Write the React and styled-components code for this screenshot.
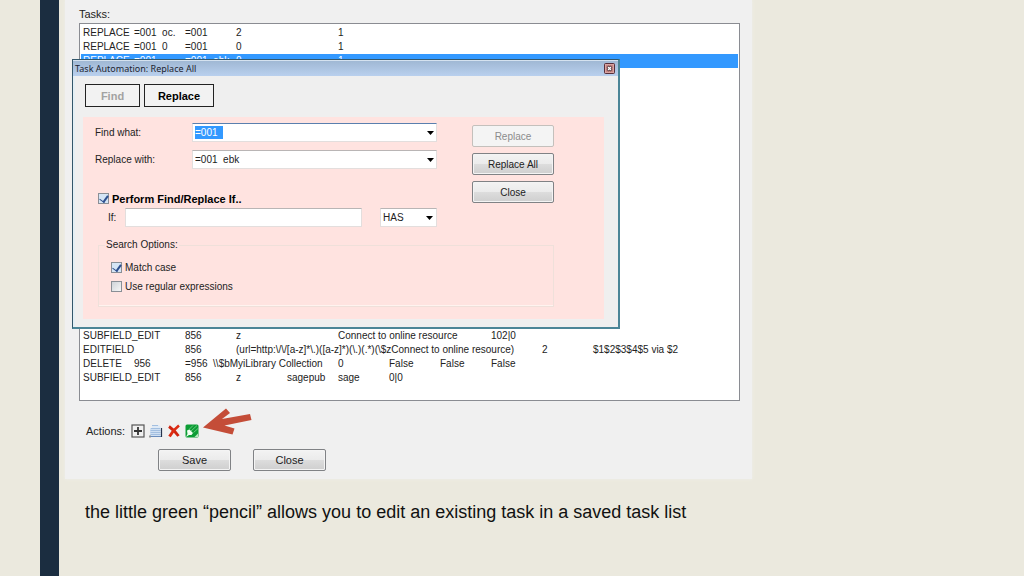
import React, { useEffect, useRef } from "react";
import styled, { createGlobalStyle } from "styled-components";

const GlobalStyle = createGlobalStyle`
  * {
    box-sizing: border-box;
  }
  body {
    margin: 0;
    background: #ebe9de;
    font-family: "Liberation Sans", Arial, sans-serif;
    font-size: 11px;
    color: #222;
  }
  button, input, select {
    font-family: inherit;
    font-size: inherit;
    color: inherit;
  }
`;

const Slide = styled.div`
  display: flex;
  min-height: 100vh;
  padding-left: 40px;
`;

const Stripe = styled.div`
  flex: 0 0 19px;
  background: #1b2d40;
`;

const Content = styled.main`
  flex: 1;
  min-width: 0;
  padding-left: 6px;
`;

const Panel = styled.section`
  position: relative;
  max-width: 687px;
  padding: 7px 12px 8px 14px;
  background: #f0f0f0;
  box-shadow: 0 0 3px #f0f0ec;
`;

const PanelTitle = styled.h2`
  margin: 0 0 2px;
  font-size: 11px;
  font-weight: 400;
  line-height: 14px;
`;

const TaskList = styled.div`
  display: flex;
  flex-direction: column;
  justify-content: space-between;
  min-height: 378px;
  padding: 2px 1px 15px;
  background: #fff;
  border: 1px solid #8a8c92;
  font-size: 10px;
  overflow: hidden;
`;

const Rows = styled.ul`
  margin: 0;
  padding: 0;
  list-style: none;
`;

const Row = styled.li`
  display: grid;
  grid-template-columns: repeat(12, 51px);
  padding-left: 2px;
  line-height: 14px;
  height: 14px;
  color: ${(props) => (props.$selected ? "#fff" : "inherit")};
  background: ${(props) => (props.$selected ? "#3399ff" : "none")};
`;

const Cell = styled.span`
  grid-row: 1;
  grid-column: ${(props) => props.$col};
  white-space: pre;
`;

const Actions = styled.div`
  display: flex;
  align-items: center;
  gap: 4px;
  margin-top: 23px;
  padding-left: 7px;
  line-height: 14px;
`;

const ActionsLabel = styled.span`
  margin-right: 2px;
`;

const IconButton = styled.button`
  display: flex;
  padding: 0;
  border: 0;
  background: none;
`;

const Pointer = styled.svg`
  position: absolute;
  left: 136px;
  top: 405px;
`;

const Footer = styled.div`
  display: flex;
  gap: 22px;
  margin-top: 11px;
  padding-left: 79px;
`;

const PushButton = styled.button`
  width: ${(props) => props.$width};
  height: 22px;
  padding: 0;
  border: 1px solid #808285;
  border-radius: 2px;
  background: linear-gradient(#f3f3f3, #ebebeb 50%, #dddddd 50%, #cfcfcf);
  box-shadow: inset 0 0 0 1px #f4f4f4;
  &:disabled {
    color: #8c8c8c;
    border-color: #c4c0bc;
    background: #f4f4f4;
  }
`;

const Caption = styled.p`
  margin: 20px 0 0 20px;
  font-size: 18px;
  line-height: 26px;
  color: #111;
`;

const Dialog = styled.div`
  position: absolute;
  left: 7px;
  right: 132px;
  top: 59px;
  background: #efefef;
  border: 1px solid #33576b;
  border-right: 2px solid #4b8597;
  border-bottom: 2px solid #4b8597;
`;

const TitleBar = styled.header`
  display: flex;
  align-items: center;
  justify-content: space-between;
  height: 16px;
  padding: 0 3px 0 2px;
  background: linear-gradient(#a0b8d4, #b9d0ee);
  border-top: 1px solid #d5e2ef;
`;

const DialogTitle = styled.h1`
  margin: 0;
  font-family: "Noto Sans", "Open Sans", sans-serif;
  font-size: 9px;
  font-weight: 400;
  line-height: 14px;
  color: #1c2430;
`;

const CloseBox = styled.button`
  display: flex;
  padding: 0;
  border: 0;
  background: none;
`;

const DialogBody = styled.div`
  padding: 8px 14px 8px 10px;
  border-left: 2px solid #e4eff4;
`;

const Tabs = styled.div`
  display: flex;
  gap: 4px;
  margin-bottom: 10px;
`;

const Tab = styled.button`
  width: ${(props) => props.$width};
  height: 23px;
  padding: 0;
  border: 1px solid #222;
  background: #f2f2f2;
  font-weight: 700;
  color: #000;
  &:disabled {
    color: #a2a2a2;
  }
`;

const Form = styled.form`
  margin-left: -2px;
  padding: 6px 50px 12px 12px;
  background: #ffe3e0;
  font-size: 10px;
`;

const FormTop = styled.div`
  display: flex;
  justify-content: space-between;
`;

const Fields = styled.div`
  flex: 0 1 342px;
`;

const Field = styled.div`
  display: flex;
  align-items: center;
  height: 19px;
  margin-bottom: 8px;
`;

const FieldLabel = styled.label`
  flex: 0 0 97px;
`;

const Combo = styled.div`
  position: relative;
  display: flex;
  flex: ${(props) => (props.$width ? `0 0 ${props.$width}` : 1)};
  height: 19px;
  background: #fff;
  border: 1px solid #e3dedd;
  border-top-color: ${(props) => (props.$active ? "#5a7fae" : "#b9b5b5")};
`;

const TextBox = styled.input`
  flex: 1;
  min-width: 0;
  padding: 0 2px;
  border: 0;
  outline: 0;
  background: none;
  line-height: 13px;
  caret-color: transparent;
  &::selection {
    color: #fff;
    background: #3399ff;
  }
`;

const DropButton = styled.button`
  display: flex;
  align-items: center;
  justify-content: center;
  width: 12px;
  padding: 0;
  border: 0;
  background: none;
`;

const DropDown = styled.select`
  width: 100%;
  padding: 0 2px;
  border: 0;
  outline: 0;
  background: none;
  appearance: none;
`;

const SelectArrow = styled.span`
  position: absolute;
  right: 3px;
  top: 0;
  height: 100%;
  display: flex;
  align-items: center;
  pointer-events: none;
`;

const CheckLabel = styled.label`
  display: flex;
  align-items: center;
  gap: 3px;
  height: 19px;
  font-size: ${(props) => (props.$bold ? "11px" : "10px")};
  font-weight: ${(props) => (props.$bold ? 700 : 400)};
  color: ${(props) => (props.$bold ? "#000" : "inherit")};
`;

const CheckBox = styled.input`
  appearance: none;
  display: grid;
  place-content: center;
  width: 11px;
  height: 11px;
  margin: 0;
  border: 1px solid #8a8f96;
  background: linear-gradient(135deg, #cfd3d8, #f6f6f6);
  &:checked {
    background: #d5e5f5;
  }
  &:checked::before {
    content: "";
    width: 4px;
    height: 7px;
    margin-top: -2px;
    border: solid #2d4f8e;
    border-width: 0 2px 1px 0;
    transform: rotate(36deg);
  }
`;

const Condition = styled.div`
  padding: 12px 0 0 3px;
`;

const ConditionRow = styled.div`
  display: flex;
  align-items: center;
  padding-left: 10px;
`;

const IfLabel = styled.label`
  flex: 0 0 17px;
`;

const ConditionBox = styled(TextBox)`
  height: 19px;
  margin-right: 18px;
  background: #fff;
  border: 1px solid #e3dedd;
  border-top-color: #b9b5b5;
`;

const Options = styled.fieldset`
  margin: 11px 0 0 3px;
  padding: 6px 12px 10px;
  border: 1px solid #efe0da;
  box-shadow: inset 0 -1px #fff3ef;
  legend {
    margin-left: -6px;
    padding: 0 1px;
    line-height: 14px;
  }
`;

const Buttons = styled.div`
  display: flex;
  flex-direction: column;
  gap: 6px;
  padding-top: 2px;
`;

const topTasks = [
  ["REPLACE", "=001  oc.", "=001", "2", "", "1"],
  ["REPLACE", "=001  0", "=001", "0", "", "1"],
  ["REPLACE", "=001", "=001  ebk", "0", "", "1"],
];

const bottomTasks = [
  ["SUBFIELD_EDIT", "", "856", "z", "", "Connect to online resource", "", "", "102|0"],
  ["EDITFIELD", "", "856", "(url=http:\\/\\/[a-z]*\\.)([a-z]*)(\\.)(.*)(\\$zConnect to online resource)", "", "", "", "", "", "2", "$1$2$3$4$5 via $2"],
  ["DELETE", "956", "=956  \\\\$bMyiLibrary Collection", "", "", "0", "False", "False", "False"],
  ["SUBFIELD_EDIT", "", "856", "z", "sagepub", "sage", "0|0"],
];

const TaskRow = ({ task, selected }) => (
  <Row $selected={selected}>
    {task.map(
      (text, i) =>
        text && (
          <Cell key={i} $col={i + 1}>
            {text}
          </Cell>
        )
    )}
  </Row>
);

const Arrow = () => (
  <svg width="7" height="4" viewBox="0 0 7 4">
    <path d="M0 0h7L3.5 4z" fill="#000" />
  </svg>
);

const AddIcon = () => (
  <svg width="14" height="14" viewBox="0 0 14 14">
    <rect x="1" y="1" width="12" height="12" fill="#f0f0f0" stroke="#555" strokeWidth="1.2" />
    <path d="M7 3v8M3 7h8" stroke="#333" strokeWidth="1.8" />
  </svg>
);

const CopyIcon = () => (
  <svg width="14" height="14" viewBox="0 0 14 14">
    <path d="M3 1h7l2.500 2.500V13H3z" fill="#dfeaf6" />
    <path d="M1 4h10v9H1z" fill="#d0e0f2" />
    <path d="M3 1.500h6M2 4.500h9M1.500 6.500h10M1.500 8.500h10M1.500 10.500h10" stroke="#a3bfe0" />
    <path d="M2 12.500h10" stroke="#6a8dbd" />
    <path d="M12.500 4v9" stroke="#26344d" strokeWidth="1.2" />
    <path d="M1 11.500v2" stroke="#444" />
  </svg>
);

const DeleteIcon = () => (
  <svg width="14" height="14" viewBox="0 0 14 14">
    <path d="M2 2.500c3.500 2.500 7 6 9.500 9.500" stroke="#cf2410" strokeWidth="2.800" fill="none" />
    <path d="M12 1.500C8 4.500 5 8 2.500 12.500" stroke="#dd2c12" strokeWidth="2.800" fill="none" />
  </svg>
);

const EditIcon = () => (
  <svg width="14" height="14" viewBox="0 0 14 14">
    <rect x="0.500" y="0.500" width="13" height="13" rx="1.500" fill="#0c9d35" />
    <path d="M4 5.500l4-4M6 7l6-5.500M8.500 8.500l4.500-4" stroke="#7fd292" strokeWidth="0.800" />
    <path d="M2 6.500l2.500-1 3.500 3.500-1.500 2H4L1 13l1.500-3z" fill="#f3fff3" />
    <path d="M9.500 13l3.500-3.500v3.500z" fill="#b9e8c0" />
  </svg>
);

const ComboBox = ({ id, defaultValue, active, inputRef }) => (
  <Combo $active={active}>
    <TextBox id={id} ref={inputRef} defaultValue={defaultValue} />
    <DropButton type="button" aria-label="Show list">
      <Arrow />
    </DropButton>
  </Combo>
);

const ReplaceDialog = () => {
  const findRef = useRef(null);

  useEffect(() => {
    findRef.current.focus();
    findRef.current.select();
  }, []);

  return (
    <Dialog role="dialog" aria-labelledby="dialog-title">
      <TitleBar>
        <DialogTitle id="dialog-title">Task Automation: Replace All</DialogTitle>
        <CloseBox aria-label="Close">
          <svg width="11" height="11" viewBox="0 0 11 11">
            <rect x="0.500" y="0.500" width="10" height="10" rx="1" fill="#c58482" stroke="#572f3b" />
            <rect x="1.500" y="1.500" width="8" height="8" fill="none" stroke="#d9a5a2" />
            <path d="M3.500 3.500l4 4M7.500 3.500l-4 4" stroke="#4b3038" strokeWidth="2.600" />
            <path d="M4 4l3 3M7 4l-3 3" stroke="#fff" strokeWidth="1.400" />
          </svg>
        </CloseBox>
      </TitleBar>
      <DialogBody>
        <Tabs>
          <Tab $width="55px" disabled>
            Find
          </Tab>
          <Tab $width="70px">Replace</Tab>
        </Tabs>
        <Form onSubmit={(e) => e.preventDefault()}>
          <FormTop>
            <Fields>
              <Field>
                <FieldLabel htmlFor="find">Find what:</FieldLabel>
                <ComboBox id="find" defaultValue="=001  " active inputRef={findRef} />
              </Field>
              <Field>
                <FieldLabel htmlFor="replace">Replace with:</FieldLabel>
                <ComboBox id="replace" defaultValue="=001  ebk" />
              </Field>
              <Condition>
                <CheckLabel $bold>
                  <CheckBox type="checkbox" defaultChecked />
                  Perform Find/Replace If..
                </CheckLabel>
                <ConditionRow>
                  <IfLabel htmlFor="condition">If:</IfLabel>
                  <ConditionBox id="condition" />
                  <Combo $width="57px">
                    <DropDown aria-label="Condition type">
                      <option>HAS</option>
                    </DropDown>
                    <SelectArrow>
                      <Arrow />
                    </SelectArrow>
                  </Combo>
                </ConditionRow>
              </Condition>
            </Fields>
            <Buttons>
              <PushButton type="button" $width="82px" disabled>
                Replace
              </PushButton>
              <PushButton type="button" $width="82px">
                Replace All
              </PushButton>
              <PushButton type="button" $width="82px">
                Close
              </PushButton>
            </Buttons>
          </FormTop>
          <Options>
            <legend>Search Options:</legend>
            <CheckLabel>
              <CheckBox type="checkbox" defaultChecked />
              Match case
            </CheckLabel>
            <CheckLabel>
              <CheckBox type="checkbox" />
              Use regular expressions
            </CheckLabel>
          </Options>
        </Form>
      </DialogBody>
    </Dialog>
  );
};

const App = () => (
  <>
    <GlobalStyle />
    <Slide>
      <Stripe />
      <Content>
        <Panel>
          <PanelTitle>Tasks:</PanelTitle>
          <TaskList>
            <Rows>
              {topTasks.map((task, i) => (
                <TaskRow key={i} task={task} selected={i === 2} />
              ))}
            </Rows>
            <Rows>
              {bottomTasks.map((task, i) => (
                <TaskRow key={i} task={task} />
              ))}
            </Rows>
          </TaskList>
          <Actions>
            <ActionsLabel>Actions:</ActionsLabel>
            <IconButton aria-label="Add">
              <AddIcon />
            </IconButton>
            <IconButton aria-label="Copy">
              <CopyIcon />
            </IconButton>
            <IconButton aria-label="Delete">
              <DeleteIcon />
            </IconButton>
            <IconButton aria-label="Edit">
              <EditIcon />
            </IconButton>
          </Actions>
          <Footer>
            <PushButton $width="73px">Save</PushButton>
            <PushButton $width="73px">Close</PushButton>
          </Footer>
          <ReplaceDialog />
          <Pointer width="52" height="32" viewBox="0 0 52 32">
            <path d="M2 22.500L25 3.500l4 4.500-8 6 28-5 1.500 6-27 5.500 10 3-2 6z" fill="#c44d38" />
          </Pointer>
        </Panel>
        <Caption>
          the little green “pencil” allows you to edit an existing task in a saved task list
        </Caption>
      </Content>
    </Slide>
  </>
);

export default App;
